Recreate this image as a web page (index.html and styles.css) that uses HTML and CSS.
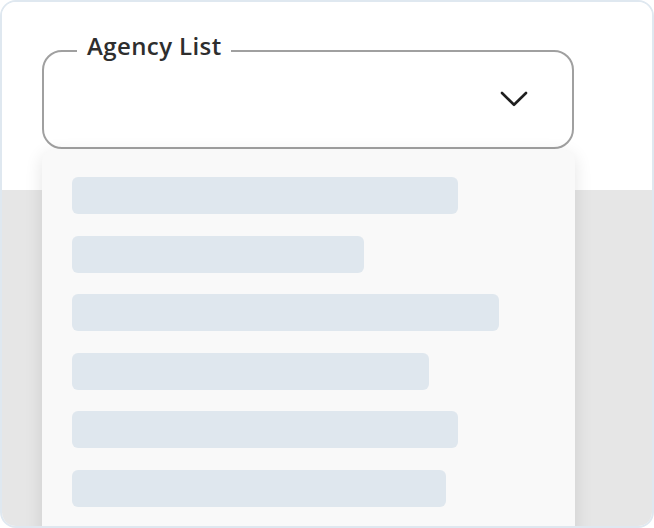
FILE: index.html
```html
<!DOCTYPE html>
<html lang="en">
<head>
<meta charset="utf-8">
<title>Agency List</title>
<link rel="stylesheet" href="styles.css">
</head>
<body>
<div class="card">
  <div class="top">
    <fieldset class="field">
      <legend class="field-label">Agency List</legend>
      <div class="field-body">
        <svg class="chevron" width="28" height="16" viewBox="0 0 28 16" aria-hidden="true">
          <path d="M2 2 L14 13.8 L26 2" fill="none" stroke="#1f1f1f" stroke-width="2.6" stroke-linecap="round" stroke-linejoin="round"/>
        </svg>
      </div>
    </fieldset>
  </div>
  <div class="content"></div>
  <div class="menu">
    <div class="bar" style="width:386px"></div>
    <div class="bar" style="width:292px"></div>
    <div class="bar" style="width:427px"></div>
    <div class="bar" style="width:357px"></div>
    <div class="bar" style="width:386px"></div>
    <div class="bar" style="width:374px"></div>
  </div>
</div>
</body>
</html>
```

FILE: styles.css
```css
* { box-sizing: border-box; }

html, body {
  margin: 0;
  padding: 0;
  background: #ffffff;
}

body {
  font-family: "Open Sans", "DejaVu Sans", sans-serif;
}

.card {
  position: relative;
  width: 654px;
  height: 528px;
  border: 2px solid #dfe8f0;
  border-radius: 16px;
  overflow: hidden;
  display: flex;
  flex-direction: column;
  background: #ffffff;
}

.top {
  height: 188px;
  flex: none;
  padding: 34px 78px 0 40px;
  background: #ffffff;
}

.content {
  flex: 1;
  background: #e6e6e6;
}

.field {
  margin: 0;
  padding: 0;
  min-width: 0;
  width: 532px;
  border: 2px solid #a0a0a0;
  border-radius: 20px;
}

.field-label {
  margin-left: 33px;
  padding: 0 9px 10px 10px;
  font-size: 24px;
  line-height: 20px;
  letter-spacing: 0.4px;
  font-weight: 600;
  color: #2e2e2e;
}

.field-body {
  height: 81px;
  display: flex;
  justify-content: flex-end;
  align-items: flex-start;
  padding: 25px 44px 0 0;
}

.chevron {
  display: block;
}

.menu {
  position: absolute;
  left: 40px;
  top: 148px;
  width: 533px;
  bottom: -20px;
  background: #f9f9f9;
  border-radius: 12px;
  box-shadow: 0 4px 18px rgba(0, 0, 0, 0.11);
  padding: 27px 30px;
  display: flex;
  flex-direction: column;
  gap: 21.6px;
}

.bar {
  height: 37px;
  flex: none;
  border-radius: 6px;
  background: #dfe7ee;
}
```
